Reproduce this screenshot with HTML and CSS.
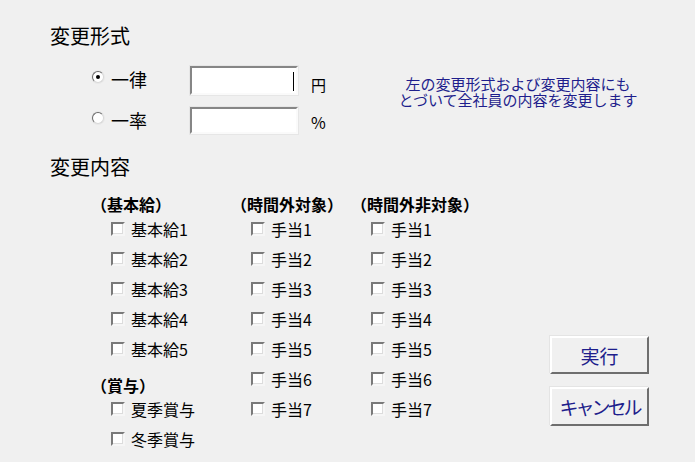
FILE: index.html
```html
<!DOCTYPE html>
<html lang="ja">
<head>
    <meta charset="UTF-8">
    <title>一括変更</title>
    <link rel="stylesheet" href="styles.css">
</head>
<body>
    <div class="page">
        <h2 class="title">変更形式</h2>

        <div class="mode">
            <div class="choices">
                <div class="choice">
                    <span class="radio checked"></span>
                    <span class="choice-label">一律</span>
                    <div class="field focused"><span class="caret"></span></div>
                    <span class="unit">円</span>
                </div>
                <div class="choice choice-rate">
                    <span class="radio"></span>
                    <span class="choice-label">一率</span>
                    <div class="field"></div>
                    <span class="unit unit-pct">%</span>
                </div>
            </div>
            <p class="note">左の変更形式および変更内容にも<br>とづいて全社員の内容を変更します</p>
        </div>

        <h2 class="title title-content">変更内容</h2>

        <div class="content">
            <div class="cols">
                <div class="col">
                    <div class="col-head">（基本給）</div>
                    <div class="check"><span class="box"></span>基本給1</div>
                    <div class="check"><span class="box"></span>基本給2</div>
                    <div class="check"><span class="box"></span>基本給3</div>
                    <div class="check"><span class="box"></span>基本給4</div>
                    <div class="check"><span class="box"></span>基本給5</div>
                    <div class="col-head col-head-sub">（賞与）</div>
                    <div class="check"><span class="box"></span>夏季賞与</div>
                    <div class="check"><span class="box"></span>冬季賞与</div>
                </div>
                <div class="col">
                    <div class="col-head">（時間外対象）</div>
                    <div class="check"><span class="box"></span>手当1</div>
                    <div class="check"><span class="box"></span>手当2</div>
                    <div class="check"><span class="box"></span>手当3</div>
                    <div class="check"><span class="box"></span>手当4</div>
                    <div class="check"><span class="box"></span>手当5</div>
                    <div class="check"><span class="box"></span>手当6</div>
                    <div class="check"><span class="box"></span>手当7</div>
                </div>
                <div class="col">
                    <div class="col-head">（時間外非対象）</div>
                    <div class="check"><span class="box"></span>手当1</div>
                    <div class="check"><span class="box"></span>手当2</div>
                    <div class="check"><span class="box"></span>手当3</div>
                    <div class="check"><span class="box"></span>手当4</div>
                    <div class="check"><span class="box"></span>手当5</div>
                    <div class="check"><span class="box"></span>手当6</div>
                    <div class="check"><span class="box"></span>手当7</div>
                </div>
            </div>

            <div class="actions">
                <button class="btn">実行</button>
                <button class="btn btn-cancel">キャンセル</button>
            </div>
        </div>
    </div>
</body>
</html>
```

FILE: styles.css
```css
body {
    margin: 0;
    background-color: #f0f0f0;
    font-family: "Noto Sans CJK JP", "Noto Sans", sans-serif;
    color: #000;
}
.page {
    padding: 26px 46px 0 50px;
}
.title {
    margin: 0;
    font-size: 20px;
    line-height: 20px;
    font-weight: normal;
}
.title-content {
    margin-top: 23px;
}

/* 変更形式 */
.mode {
    display: flex;
    align-items: flex-start;
    margin-top: 20px;
}
.choices {
    margin-left: 42px;
}
.choice {
    display: flex;
    align-items: flex-start;
    height: 29px;
}
.choice-rate {
    height: 27px;
    margin-top: 12px;
}
.radio {
    width: 12px;
    height: 12px;
    margin-top: 5px;
    margin-right: 7px;
    box-sizing: border-box;
    border-radius: 50%;
    background-color: #fff;
    border: 1px solid;
    border-color: #6a6a6a #d8d8d8 #d8d8d8 #6a6a6a;
    box-shadow: 0 0 0 1px #e8e8e8;
    display: flex;
    align-items: center;
    justify-content: center;
}
.radio.checked::after {
    content: "";
    width: 4px;
    height: 4px;
    border-radius: 50%;
    background-color: #000;
}
.choice-label {
    width: 79px;
    margin-top: 4px;
    font-size: 18px;
    line-height: 18px;
}
.field {
    width: 108px;
    height: 100%;
    box-sizing: border-box;
    background-color: #fff;
    border: 2px solid;
    border-color: #868686 #fafafa #fafafa #868686;
    box-shadow: 0 0 0 1px #e6e6e6;
    display: flex;
    justify-content: flex-end;
    padding: 4px 2px 0 0;
}
.caret {
    width: 1px;
    height: 19px;
    background-color: #000;
}
.unit {
    width: 20px;
    margin-left: 13px;
    margin-top: 11px;
    font-size: 15px;
    line-height: 15px;
}
.unit-pct {
    margin-top: 8px;
    font-size: 16px;
}
.note {
    width: 260px;
    margin: 10px 0 0 57px;
    text-align: center;
    font-size: 15px;
    line-height: 16px;
    color: #1e1e8c;
}

/* 変更内容 */
.content {
    display: flex;
    margin-top: 19px;
}
.cols {
    display: grid;
    grid-template-columns: 140px 120px 130px;
    margin-left: 41px;
}
.col-head {
    height: 25px;
    font-size: 16px;
    line-height: 16px;
    font-weight: bold;
}
.col-head-sub {
    height: 30px;
    padding-top: 6px;
    box-sizing: border-box;
}
.check {
    display: flex;
    align-items: flex-start;
    height: 30px;
    padding-left: 20px;
    font-size: 16px;
    line-height: 16px;
}
.box {
    width: 14px;
    height: 14px;
    margin-top: 1px;
    margin-right: 6px;
    box-sizing: border-box;
    background-color: #fff;
    border: 2px solid;
    border-color: #7a7a7a #f6f6f6 #f6f6f6 #7a7a7a;
    box-shadow: inset -1px -1px 0 #dcdcdc;
}
.actions {
    margin-left: auto;
    padding-top: 140px;
    display: flex;
    flex-direction: column;
    gap: 13px;
}
.btn {
    width: 99px;
    height: 38px;
    padding: 0;
    font-family: inherit;
    font-size: 19px;
    color: #1e1e8c;
    background-color: #f0f0f0;
    border: 2px solid;
    border-color: #fff #6e6e6e #6e6e6e #fff;
    box-shadow: -1px -1px 0 #e4e4e4;
}
.btn-cancel {
    height: 39px;
    letter-spacing: -3px;
}
```
